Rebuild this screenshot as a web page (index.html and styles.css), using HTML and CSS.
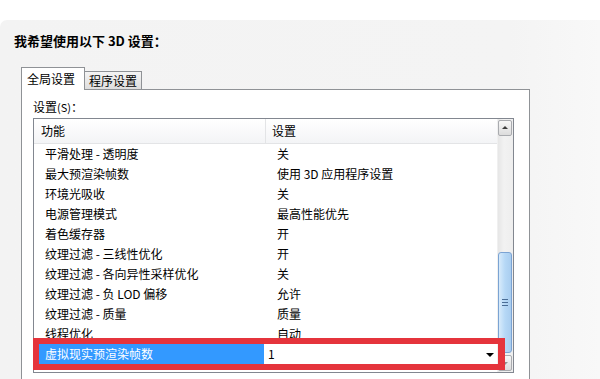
FILE: index.html
```html
<!DOCTYPE html>
<html lang="zh-CN">
<head>
<meta charset="utf-8">
<title>3D 设置</title>
<link rel="stylesheet" href="styles.css">
</head>
<body>
<div class="window">
  <h1 class="title">我希望使用以下 3D 设置：</h1>
  <div class="tabs">
    <div class="tabstrip">
      <div class="tab active">全局设置</div>
      <div class="tab">程序设置</div>
    </div>
    <div class="tabpanel">
      <div class="label">设置<span class="key">(S)</span>：</div>
      <div class="listbox">
        <div class="list">
          <div class="head"><div class="c1">功能</div><div class="c2">设置</div></div>
          <div class="row"><div class="c1">平滑处理 - 透明度</div><div class="c2">关</div></div>
          <div class="row"><div class="c1">最大预渲染帧数</div><div class="c2">使用 3D 应用程序设置</div></div>
          <div class="row"><div class="c1">环境光吸收</div><div class="c2">关</div></div>
          <div class="row"><div class="c1">电源管理模式</div><div class="c2">最高性能优先</div></div>
          <div class="row"><div class="c1">着色缓存器</div><div class="c2">开</div></div>
          <div class="row"><div class="c1">纹理过滤 - 三线性优化</div><div class="c2">开</div></div>
          <div class="row"><div class="c1">纹理过滤 - 各向异性采样优化</div><div class="c2">关</div></div>
          <div class="row"><div class="c1">纹理过滤 - 负 LOD 偏移</div><div class="c2">允许</div></div>
          <div class="row"><div class="c1">纹理过滤 - 质量</div><div class="c2">质量</div></div>
          <div class="row"><div class="c1">线程优化</div><div class="c2">自动</div></div>
          <div class="row sel">
            <div class="c1">虚拟现实预渲染帧数</div>
            <div class="c2 combo"><span>1</span><span class="arrow"></span></div>
            <div class="mark"></div>
          </div>
        </div>
        <div class="scrollbar">
          <div class="sb-btn up"><span class="tri-up"></span></div>
          <div class="sb-track-top"></div>
          <div class="sb-thumb"><span class="grip"></span></div>
          <div class="sb-track-bot"></div>
          <div class="sb-btn down"><span class="tri-down"></span></div>
        </div>
      </div>
    </div>
  </div>
</div>
</body>
</html>
```
FILE: styles.css
```css
html, body {
  margin: 0;
  padding: 0;
  background: #ffffff;
  overflow: hidden;
}
body {
  width: 600px;
  height: 379px;
  font-family: "Noto Sans CJK SC", "Liberation Sans", sans-serif;
  font-size: 12px;
  color: #000;
}
.window {
  margin-top: 20px;
  height: 359px;
  background: linear-gradient(to right, #f3f3f3 0%, #f4f4f4 85%, #f8f8f8 100%);
  border-top-left-radius: 7px;
  padding-top: 13px;
  box-sizing: border-box;
  overflow: hidden;
}
.title {
  margin: 0 0 19px 14px;
  font-size: 13px;
  line-height: 16px;
  font-weight: bold;
}
.tabs {
  margin-left: 21px;
  width: 509px;
}
.tabstrip {
  display: flex;
  align-items: flex-end;
  height: 21px;
}
.tab {
  height: 17px;
  line-height: 17px;
  padding: 0 4px;
  border: 1px solid #8f9296;
  border-bottom: none;
  border-left: none;
  background: linear-gradient(#f4f4f4, #dedede);
  color: #000;
}
.tab.active {
  position: relative;
  z-index: 1;
  height: 22px;
  line-height: 22px;
  padding: 0 9px 0 5px;
  background: #ffffff;
  border-left: 1px solid #8f9296;
  margin-bottom: -1px;
}
.tabpanel {
  border: 1px solid #8f9296;
  background: #ffffff;
  padding: 10px 15px 0 11px;
  height: 300px;
}
.label {
  line-height: 14px;
  margin-bottom: 4px;
}
.label .key {
  font-size: 11px;
}
.listbox {
  display: flex;
  width: 481px;
  height: 255px;
  box-sizing: border-box;
  border: 1px solid #828790;
  background: #ffffff;
}
.list {
  width: 463px;
  overflow: visible;
  position: relative;
}
.head {
  display: flex;
  height: 24px;
  line-height: 24px;
  border-bottom: 1px solid #e3e4e6;
  background: linear-gradient(#ffffff, #f3f4f6);
}
.head .c1 {
  width: 231px;
  padding-left: 7px;
  box-sizing: border-box;
}
.head .c2 {
  padding-left: 6px;
  border-left: 1px solid #e3e4e6;
}
.row {
  display: flex;
  height: 20px;
  line-height: 20px;
  position: relative;
}
.row .c1 {
  width: 231px;
  padding-left: 11px;
  box-sizing: border-box;
  white-space: nowrap;
}
.row .c2 {
  padding-left: 12px;
  white-space: nowrap;
}
.row.sel .c1 {
  width: 230px;
  background: #3399ff;
  color: #ffffff;
}
.row.sel .combo {
  flex: 1;
  display: flex;
  justify-content: space-between;
  align-items: center;
  padding: 0 3px 0 4px;
  background: #ffffff;
}
.arrow {
  width: 0;
  height: 0;
  border-left: 4px solid transparent;
  border-right: 4px solid transparent;
  border-top: 4px solid #000;
  margin-top: 2px;
}
.mark {
  position: absolute;
  top: -6px;
  bottom: -6px;
  left: -1px;
  right: -8px;
  border: 6px solid #e5343c;
  border-right-width: 7px;
  z-index: 2;
}
.scrollbar {
  width: 16px;
  display: flex;
  flex-direction: column;
  background: linear-gradient(to right, #e6e6e6, #f2f2f2 40%, #eeeeee);
  border-left: 1px solid #f0f0f0;
  box-sizing: border-box;
}
.sb-btn {
  height: 16px;
  margin: 1px 1px 0 0;
  border: 1px solid #a9abaf;
  border-radius: 2px;
  background: linear-gradient(#f7f7f7, #dcdcdc);
  display: flex;
  align-items: center;
  justify-content: center;
  box-sizing: border-box;
}
.sb-btn.down {
  margin: 0 1px 1px 0;
  height: 16px;
}
.tri-up {
  width: 0;
  height: 0;
  border-left: 3px solid transparent;
  border-right: 3px solid transparent;
  border-bottom: 3px solid #3c3c3c;
}
.tri-down {
  width: 0;
  height: 0;
  border-left: 3px solid transparent;
  border-right: 3px solid transparent;
  border-top: 3px solid #909090;
}
.sb-track-top {
  height: 117px;
}
.sb-thumb {
  height: 101px;
  margin-right: 1px;
  border: 1px solid #7ba3d3;
  border-radius: 3px;
  background: linear-gradient(to right, #d8ebfb, #b6d8f6 50%, #a9cdef);
  box-sizing: border-box;
  display: flex;
  align-items: center;
  justify-content: center;
}
.grip {
  width: 6px;
  height: 7px;
  background: repeating-linear-gradient(#4a6d96 0 1px, transparent 1px 3px);
}
.sb-track-bot {
  height: 2px;
}
```
